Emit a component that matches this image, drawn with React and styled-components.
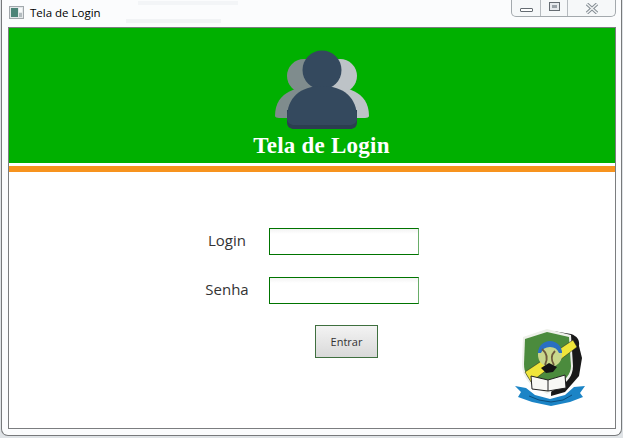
import React from 'react'
import styled, { createGlobalStyle } from 'styled-components'

const Global = createGlobalStyle`
  html, body { margin: 0; padding: 0; background: #f3f6f9; }
  #root { width: 623px; height: 438px; overflow: hidden; }
`

function AppIcon() {
  return (
    <svg width="15" height="13" viewBox="0 0 15 13">
      <rect x="0.5" y="0.5" width="14" height="12" fill="#e4e8ea" stroke="#a2a8ac" />
      <rect x="2" y="2" width="7" height="9" fill="#4d8478" />
      <rect x="10" y="2" width="3" height="4" fill="#f7f9fa" />
      <rect x="10" y="7" width="3" height="4" fill="#b4bcc0" />
    </svg>
  )
}

function Users() {
  return (
    <svg width="96" height="80" viewBox="34 10 96 80">
      <g fill="#bdc3c7">
        <circle cx="100" cy="36" r="17" />
        <path d="M84 46 C104 46 129 50 129 76 C129 77 127 78 125 78 L84 78 Z" />
      </g>
      <g fill="#7f8c8d">
        <circle cx="64" cy="36" r="17" />
        <path d="M80 46 C60 46 35 50 35 76 C35 77 37 78 39 78 L80 78 Z" />
      </g>
      <path d="M47 70 L47 82 C47 87 50 89 54 89 L110 89 C114 89 117 87 117 82 L117 70 Z" fill="#2c3e50" />
      <circle cx="82" cy="30" r="19.5" fill="#34495e" />
      <path d="M82 46 C60 46 47 58 47 78 C47 83 51 85 54 85 L110 85 C113 85 117 83 117 78 C117 58 104 46 82 46 Z" fill="#34495e" />
    </svg>
  )
}

function Crest() {
  return (
    <svg width="76" height="84" viewBox="10 6 76 84">
      <path d="M48 9 L66 12 C72 14 75 18 74 24 L77 36 L74 54 L60 70 L46 74 Z" fill="#191919" />
      <path d="M18 15 L42 7 L66 13 L68 44 C68 54 62 60 56 64 L42 72 L28 64 C20 58 17 50 17 42 Z" fill="#eef0ea" />
      <path d="M20 17 L42 10 L64 15 L66 44 C66 52 60 58 54 62 L42 69 L30 62 C22 56 19 50 19 42 Z" fill="#4b8b3d" />
      <path d="M20 50 L68 18 L72 25 L26 60 Z" fill="#efe53a" stroke="#1c1c1c" strokeWidth="0.5" />
      <circle cx="45" cy="33" r="12" fill="#c9d78c" />
      <path d="M33 31 A12 12 0 0 1 57 31 L54 31 A9.5 9 0 0 0 36 31 Z" fill="#2a6fc2" />
      <path d="M37 27 C43 32 43 37 40 43 M50 29 C46 33 46 38 49 43" stroke="#6e5a3c" strokeWidth="1.8" fill="none" />
      <path d="M36 46 L44 41 L52 45 L48 50 L41 51 Z" fill="#141414" />
      <path d="M26 54 L43 58 L60 53 L61 66 L43 69 L27 67 Z" fill="#f8f8f5" stroke="#222" strokeWidth="1" />
      <path d="M43 58 L43 69" stroke="#222" strokeWidth="1" />
      <path d="M10 64 L21 66 L30 73 L45 77 L60 73 L69 65 L80 64 L75 71 L78 75 L65 80 L46 84 L27 80 L13 75 L16 70 Z" fill="#1b84c6" />
      <path d="M24 74 L34 78 L46 80 L58 78 L67 73" stroke="#0c4d7c" strokeWidth="1" fill="none" />
    </svg>
  )
}

export default function App() {
  return (
    <>
      <Global />
      <Desktop>
        <Frame>
          <TitleBar>
            <AppIcon />
            <TitleText>Tela de Login</TitleText>
            <Controls>
              <MinButton><MinGlyph /></MinButton>
              <MaxButton><MaxGlyph /></MaxButton>
              <CloseButton>
                <svg width="14" height="11" viewBox="0 0 14 11">
                  <path d="M2 1 L12 10 M12 1 L2 10" stroke="#858e94" strokeWidth="3.4" />
                  <path d="M2 1 L12 10 M12 1 L2 10" stroke="#f2f4f5" strokeWidth="1.4" />
                </svg>
              </CloseButton>
            </Controls>
          </TitleBar>
          <Panel>
            <Header>
              <Users />
              <HeaderTitle>Tela de Login</HeaderTitle>
            </Header>
            <Stripe />
            <Body>
              <Form>
                <Label>Login</Label>
                <Input type="text" />
                <Label>Senha</Label>
                <Input type="password" />
                <Submit type="button">Entrar</Submit>
              </Form>
              <CrestWrap><Crest /></CrestWrap>
            </Body>
          </Panel>
        </Frame>
      </Desktop>
    </>
  )
}

const Desktop = styled.div`
  width: 623px;
  height: 438px;
  box-sizing: border-box;
  padding: 0 0 2px 1px;
  background: #dfe3e6;
`

const Frame = styled.div`
  width: 621px;
  height: 436px;
  box-sizing: border-box;
  padding: 0 5px 6px 6px;
  display: flex;
  flex-direction: column;
  background: #fbfcfd;
  border: 1px solid #77797b;
  border-top: none;
  border-radius: 0 0 7px 7px;
`

const TitleBar = styled.div`
  height: 27px;
  flex: none;
  display: flex;
  align-items: flex-start;
  padding-left: 1px;
  gap: 6px;
  background:
    linear-gradient(#f3f5f7, #f3f5f7) 130px 1px / 100px 4px no-repeat,
    linear-gradient(#f1f3f5, #f1f3f5) 118px 19px / 95px 4px no-repeat;
  svg { margin-top: 6px; }
`

const TitleText = styled.span`
  font-family: "Open Sans", "Noto Sans", sans-serif;
  font-size: 11.5px;
  line-height: 16px;
  margin-top: 5px;
  color: #000;
`

const Controls = styled.div`
  margin-left: auto;
  height: 17px;
  display: flex;
  box-sizing: border-box;
  border: 1px solid #a3a9ad;
  border-top: none;
  border-radius: 0 0 5px 5px;
  background: #f6f8f9;
`

const MinButton = styled.div`
  width: 28px;
  display: flex;
  align-items: flex-start;
  justify-content: center;
  border-right: 1px solid #b6bbbf;
`

const MaxButton = styled(MinButton)`
  width: 26px;
`

const CloseButton = styled(MinButton)`
  width: 47px;
  border-right: none;
  svg { margin-top: 3px; }
`

const MinGlyph = styled.span`
  width: 11px;
  height: 2px;
  margin-top: 8px;
  border: 1px solid #656c72;
  border-radius: 1px;
  background: #fff;
`

const MaxGlyph = styled.span`
  width: 5px;
  height: 3px;
  margin-top: 3px;
  border: 2px solid #e6eaed;
  outline: 1px solid #656c72;
  background: #9aa2a8;
`

const Panel = styled.div`
  flex: 1;
  display: flex;
  flex-direction: column;
  background: #fff;
  border: 1px solid #7b7d7f;
  min-height: 0;
`

const Header = styled.div`
  height: 135px;
  flex: none;
  box-sizing: border-box;
  padding: 22px 0 0 19px;
  display: flex;
  flex-direction: column;
  align-items: center;
  background: #00b000;
`

const HeaderTitle = styled.h1`
  margin: 3px 0 0;
  font-family: "Liberation Serif", serif;
  font-weight: 700;
  font-size: 23px;
  letter-spacing: 0.25px;
  line-height: 26px;
  color: #fff;
`

const Stripe = styled.div`
  flex: none;
  height: 6px;
  border-top: 3px solid #fff;
  background: #f7931e;
`

const Body = styled.div`
  flex: 1;
  display: grid;
  grid-template-columns: 1fr 76px 24px;
  min-height: 0;
`

const Form = styled.div`
  padding: 56px 0 0 182px;
  display: grid;
  grid-template-columns: 72px 150px;
  grid-auto-rows: 27px;
  column-gap: 6px;
  row-gap: 22px;
  align-items: center;
`

const Label = styled.label`
  font-family: "Open Sans", "Noto Sans", sans-serif;
  font-size: 15px;
  color: #333;
  text-align: center;
  padding-bottom: 3px;
`

const Input = styled.input`
  width: 150px;
  height: 27px;
  box-sizing: border-box;
  border: 1px solid #007400;
  border-right-color: #69ad69;
  background: linear-gradient(#f3f3f3, #fff 5px);
  outline: none;
`

const Submit = styled.button`
  grid-column: 2;
  align-self: start;
  justify-self: start;
  margin: -1px 0 0 46px;
  width: 63px;
  height: 33px;
  padding: 0;
  border: 1px solid #3f6f3f;
  background: linear-gradient(#f3f3f3, #d9d9d9);
  font-family: "Open Sans", "Noto Sans", sans-serif;
  font-size: 11px;
  color: #333;
`

const CrestWrap = styled.div`
  grid-column: 2;
  padding-top: 156px;
  filter: blur(0.4px);
`
